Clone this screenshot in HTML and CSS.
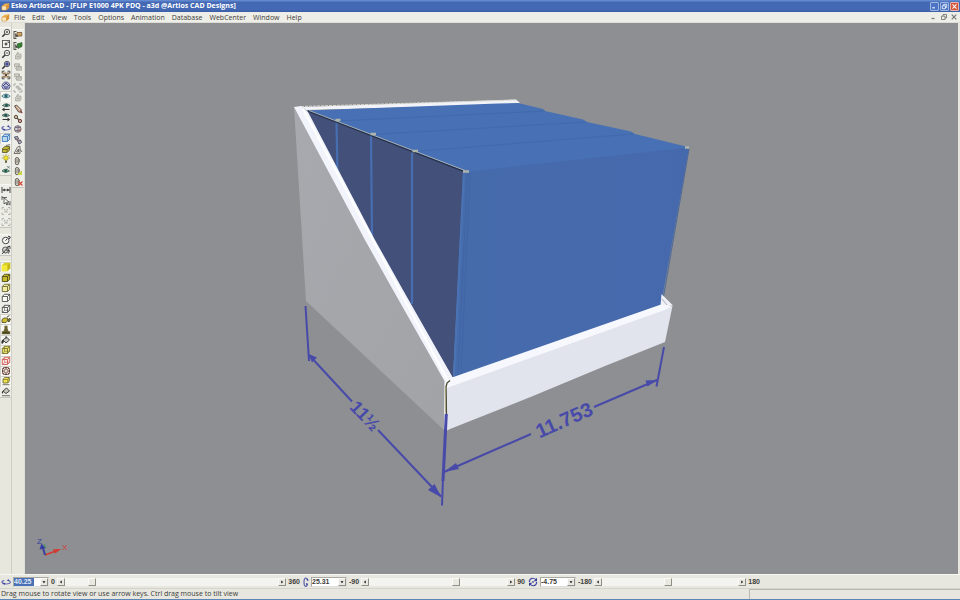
FILE: index.html
```html
<!DOCTYPE html>
<html lang="en">
<head>
<meta charset="utf-8">
<title>Esko ArtiosCAD</title>
<link rel="stylesheet" href="styles.css">
</head>
<body>
<svg class="defs" aria-hidden="true">
  <defs>
    <symbol id="lens" viewBox="0 0 10 10"><circle cx="6" cy="4" r="2.7" fill="#f4f4ee" stroke="#444" stroke-width=".9"/><path d="M4 6 1.3 8.8" stroke="#333" stroke-width="1.5"/></symbol>
    <symbol id="zoom-in" viewBox="0 0 10 10"><use href="#lens"/><path d="M4.8 4h2.4M6 2.8v2.4" stroke="#333" stroke-width=".8"/></symbol>
    <symbol id="zoom-out" viewBox="0 0 10 10"><use href="#lens"/><path d="M4.6 4h2.8" stroke="#333" stroke-width=".8"/></symbol>
    <symbol id="zoom-prev" viewBox="0 0 10 10"><use href="#lens"/><circle cx="6" cy="4" r="2.2" fill="#7980b8"/><path d="M5 4h2M6 3v2" stroke="#303878" stroke-width=".9"/></symbol>
    <symbol id="fit" viewBox="0 0 10 10"><rect x="1.5" y="1.5" width="7" height="7" fill="#f6f6f0" stroke="#555" stroke-width=".9"/><path d="M3.5 5h3M5 3.5v3" stroke="#222" stroke-width="1"/><path d="M7 2v1.5h1.5" stroke="#333" fill="none" stroke-width=".7"/></symbol>
    <symbol id="extents" viewBox="0 0 10 10"><path d="M1.2 3.5V1.2h2.3M6.5 1.2h2.3v2.3M8.8 6.5v2.3H6.5M3.500 8.800H1.200V6.500" fill="none" stroke="#444"/><path d="M1.800 2.500h3v2h-3zM5.500 2.500h2.800v2H5.500zM1.800 5.700h3v2h-3zM5.500 5.700h2.800v2H5.500z" fill="#9a7d5c"/><path d="m4 4 2 2M6 4 4 6" stroke="#55432e"/></symbol>
    <symbol id="home" viewBox="0 0 10 10"><path d="M1 5.400C1 2.700 3 1 5 1s4 1.700 4 4.400L7.800 8H2.200z" fill="#c6cae4" stroke="#46497c" stroke-width=".9"/><path d="M2 5 5 2.200 8 5M5 8V5" fill="none" stroke="#34386e"/><circle cx="3.400" cy="6" r=".8" fill="#3d458c"/><circle cx="6.700" cy="6" r=".8" fill="#3d458c"/></symbol>
    <symbol id="eye" viewBox="0 0 10 10"><path d="M.8 5.200Q5 .8 9.200 5.200 5 8.700.8 5.200z" fill="#cfe5e8" stroke="#467780" stroke-width=".9"/><circle cx="5" cy="5" r="1.700" fill="#24636c"/></symbol>
    <symbol id="eye-left" viewBox="0 0 10 10"><path d="M1.500 3.500Q5.500.3 9 3.500 5 6 1.500 3.500z" fill="#a9cac4" stroke="#37594f" stroke-width=".9"/><circle cx="5.500" cy="3.200" r="1.400" fill="#23564e"/><path d="M3.500 5.600.8 7.500l2.700 1.900V8h5V7h-5z" fill="#333"/></symbol>
    <symbol id="eye-right" viewBox="0 0 10 10"><path d="M1 3.500Q4.500.3 8.500 3.500 5 6 1 3.500z" fill="#a9cac4" stroke="#37594f" stroke-width=".9"/><circle cx="4.700" cy="3.200" r="1.400" fill="#23564e"/><path d="m6.500 5.600 2.700 1.900-2.700 1.900V8h-5V7h5z" fill="#333"/></symbol>
    <symbol id="orbit" viewBox="0 0 10 10"><path d="M3.300 3.500C0 4 0 7 5 7s5.500-2.500 2.200-3.500" fill="none" stroke="#5b62ad" stroke-width="1.100"/><path d="m2 5.500 2.300.8-1.300 2z" fill="#373f98"/><path d="m5.500 3.200 2.500-1v2z" fill="#373f98"/></symbol>
    <symbol id="orbit-v" viewBox="2 0 6 10"><path d="M6.500 3.300C6 0 3 0 3 5s2.500 5.500 3.500 2.200" fill="none" stroke="#5b62ad" stroke-width="1.200"/><path d="m4.800 6 .8 2.500 1.600-1.700zM5.200 1.500l2.300 1L7 4.400z" fill="#373f98"/></symbol>
    <symbol id="spin" viewBox="0 0 10 10"><path d="M1.300 5C1.500.8 6 .2 8 3M8.700 5C8.500 9.200 4 9.800 2 7" fill="none" stroke="#4a51a5" stroke-width="1.200"/><path d="M9 .8v3.400H5.700zM1 9.200V5.800h3.300z" fill="#373f98"/><circle cx="5" cy="5" r=".9" fill="#555da8"/></symbol>
    <symbol id="cube" viewBox="0 0 10 10"><path d="M1.300 3.500 3.500 1.300h5.200v4.900L6.500 8.500H1.300z" fill="var(--face)"/><path d="M1.300 3.500h5.200v5H1.300zM1.300 3.500l2.200-2.200h5.200v4.900L6.500 8.500M6.500 3.500l2.200-2.200" fill="none" stroke="var(--edge)" stroke-width=".9" stroke-linejoin="round"/></symbol>
    <symbol id="cube-solid" viewBox="0 0 10 10"><path d="M.8 3.300 3.500.8h5.700v5.400L6.500 9.200H.8z" fill="#d9cf22"/><path d="M.8 3.300h5.700v5.900H.8z" fill="#f2e93c"/><path d="M6.500 3.300 9.200.8v5.400l-2.700 3z" fill="#c2b61c"/></symbol>
    <symbol id="cube-wire" viewBox="0 0 10 10"><use href="#cube"/><path d="M3.500 1.300v5h5.200M3.500 6.300 1.300 8.500" fill="none" stroke="var(--edge)" stroke-width=".6"/></symbol>
    <symbol id="fold" viewBox="0 0 10 10"><path d="M1.500 4.500 4 2.500h4.500v3.800L6 8.500H1.500z" fill="#c5b930" stroke="#575229" stroke-width=".8"/><path d="M2 5.500h4V8M6 5.500l2.500-2" fill="none" stroke="#575229" stroke-width=".8"/><path d="m5 1.500 4-.8" stroke="#777"/></symbol>
    <symbol id="bulb" viewBox="0 0 10 10"><circle cx="5" cy="4" r="2.300" fill="#f1e32f" stroke="#9a8c20" stroke-width=".6"/><path d="M4 6.500h2v2.300H4z" fill="#62603f"/><path d="M5 0v1M.8 4h1.400M7.800 4h1.400M1.800 1l1 1M8.200 1l-1 1" stroke="#aaa036" stroke-width=".8"/></symbol>
    <symbol id="eye-x" viewBox="0 0 10 10"><path d="M1 6Q4.500 2.500 8.500 6 4.500 9 1 6z" fill="#99beb2" stroke="#3b6658" stroke-width=".9"/><circle cx="4.700" cy="5.900" r="1.400" fill="#215247"/><path d="m6.200 1 2.500 2.500M8.700 1 6.200 3.500" stroke="#6a8180" stroke-width=".9"/></symbol>
    <symbol id="dimension" viewBox="0 0 10 10"><path d="M1 2v6M9 2v6M1.500 5h7" stroke="#444" fill="none"/><path d="M1.500 5 4 3.400v3.200zM8.500 5 6 3.400v3.200z" fill="#444"/></symbol>
    <symbol id="pick-dim" viewBox="0 0 10 10"><path d="M1 1.500h5M1 0v4M5.500 6v3M9 5v4.500M5.500 8H9" stroke="#555" stroke-width=".9"/><path d="m3 2 5 4-2.300.2 1 2.300-1 .4-1-2.300L3 8z" fill="#f8f8f2" stroke="#333" stroke-width=".7"/></symbol>
    <symbol id="dim-grey" viewBox="0 0 10 10"><path d="M1 3.500v-2h2M7 1.500h2v2M9 6.500v2H7M3 8.500H1v-2" fill="none" stroke="#b4b4ac"/><path d="m3 3 4 4M7 3 3 7" stroke="#b8b8b0" stroke-width="1.200" stroke-dasharray="2 1"/></symbol>
    <symbol id="clock" viewBox="0 0 10 10"><circle cx="4.700" cy="5.500" r="3.300" fill="#f7f7f2" stroke="#46464e"/><path d="m4.500 5.700 1.800-2M7 1.200l2.300.8-1 2" stroke="#333" fill="none"/></symbol>
    <symbol id="clock-off" viewBox="0 0 10 10"><circle cx="4.500" cy="5" r="3" fill="#d2d2ce" stroke="#555"/><path d="M8.500.8 1 9M5 5l3.500.5-1 3M6.500 1.500H9V4" stroke="#333" stroke-width=".9" fill="none"/></symbol>
    <symbol id="lift" viewBox="0 0 10 10"><path d="M1 5.500 3 4h3.500v3L5 8.500H1z" fill="#ccbe2e" stroke="#4e4a29" stroke-width=".8"/><path d="m6 3 2.500-1.500M7 7l1-2.500 1.500.5-1.500 3z" stroke="#555234" fill="#8f893c"/></symbol>
    <symbol id="stamp" viewBox="0 0 10 10"><path d="M3.500.8h3v2.700l1 2.800h1.700v3H.8v-3h1.700l1-2.800z" fill="#67612e"/><path d="M2 7.700h6" stroke="#3b381c" stroke-width=".8"/></symbol>
    <symbol id="bucket" viewBox="0 0 10 10"><path d="m2 5 3.500-3 3 3L5 8z" fill="#c7c7c0" stroke="#35352f" stroke-width=".9"/><path d="M2 5C.5 5 .8 8 1 8.500 2.500 8 3 6 2 5zM5 1v3" fill="#333" stroke="#333" stroke-width=".8"/></symbol>
    <symbol id="bucket-ground" viewBox="0 0 10 10"><path d="m2 4 3.500-3 3 3L5 6.500z" fill="#c7c7c0" stroke="#35352f" stroke-width=".9"/><path d="M2 4C.7 4 .8 6 1 6.800 2.300 6.300 2.700 5 2 4z" fill="#333"/><path d="M1 8.700h8" stroke="#77756a" stroke-width="1.100"/></symbol>
    <symbol id="target" viewBox="0 0 10 10"><rect x="1.500" y="1.500" width="7" height="7" rx="2" fill="#e8dcd3" stroke="#704e43"/><path d="M5 1v3M5 6v3M1 5h3M6 5h3M2 2l1.500 1.500M8 2 6.500 3.500M2 8l1.500-1.500M8 8 6.500 6.500" stroke="#5d3730" stroke-width=".9"/></symbol>
    <symbol id="cube-base" viewBox="0 0 10 10"><path d="M2 3.500 3.500 1.500h4.800v3.500L6.800 7H2z" fill="#eee34a" stroke="#64602d" stroke-width=".8"/><path d="M2 3.500h4.800V7M6.800 3.500l1.500-2" stroke="#64602d" stroke-width=".6" fill="none"/><path d="M1.500 8.700h7" stroke="#777664"/></symbol>
    <symbol id="pick-box" viewBox="0 0 10 10"><path d="M1 1v8M1 1.500h2.500M1 8.500h2.500" stroke="#5a574b" fill="none"/><path d="M4 2.500h4.800v3.500H4z" fill="#cfa469" stroke="#70532f" stroke-width=".8"/><path d="m2 3 3.500 3.500-2 .2L2.500 8z" fill="#444"/></symbol>
    <symbol id="pick-green" viewBox="0 0 10 10"><path d="M1 1v8M1 1.500h2.500M1 8.500h2.500" stroke="#5a574b" fill="none"/><path d="M4 3 9 1.500v4L5 7.500z" fill="#338033" stroke="#285528" stroke-width=".6"/><path d="m2 3 3.500 3.500-2 .2L2.500 8z" fill="#444"/></symbol>
    <symbol id="grey-box" viewBox="0 0 10 10"><path d="M2.500 4.500 4 3h4v4L6.500 8h-4zM4 3V1.800h2" fill="#cbcbc4" stroke="#aaa9a2" stroke-width=".8"/><path d="M4 5.500h2.500" stroke="#a6a69f" stroke-width=".8"/></symbol>
    <symbol id="grey-stack" viewBox="0 0 10 10"><path d="M1.500 1.800h5v3h-5zM3.500 4.500h5v3.800h-5z" fill="#cecec7" stroke="#a9a9a2" stroke-width=".8"/><path d="m2 7 5-5M4 8l4-3" stroke="#aaa9a2" stroke-width=".8"/></symbol>
    <symbol id="grey-group" viewBox="0 0 10 10"><path d="M1 3V1h2M6 1h3v2M9 7v2H6M3 9H1V7" fill="none" stroke="#a8a8a1"/><path d="M3 3h3v2H3zM5 5h3v2H5z" fill="#c6c6be" stroke="#adada6" stroke-width=".6"/></symbol>
    <symbol id="pencil" viewBox="0 0 10 10"><path d="m1.500 2 2-1 4.800 4.800-.5 2.400-2.300-.2z" fill="#c9a68b" stroke="#564944" stroke-width=".9"/><path d="m3.500 2.500 3.500 3.500" stroke="#f1ddca" stroke-width=".8"/><path d="m7.500 7.200 1.700 1.800" stroke="#8a3737" stroke-width="1.200"/></symbol>
    <symbol id="link" viewBox="0 0 10 10"><circle cx="3" cy="3" r="1.700" fill="#cbb899" stroke="#5d5044"/><circle cx="7" cy="7" r="1.700" fill="#c7a09b" stroke="#6b4540"/><path d="m4 4 2 2" stroke="#554" stroke-width="1.300"/></symbol>
    <symbol id="globe" viewBox="0 0 10 10"><circle cx="4.800" cy="5" r="3.300" fill="#d5cfd1" stroke="#6a5c63" stroke-width=".9"/><path d="M2 3.500h6M2 6.500h6M5 2v6" stroke="#655e78" stroke-width=".8"/><circle cx="7" cy="6" r="1" fill="#ae6a60"/></symbol>
    <symbol id="chain" viewBox="0 0 10 10"><path d="m1.500 2 3-.5 1 2.500-2.500 1zM4.500 5.500l3-.5 1 2.500L6 9z" fill="#c9c5d0" stroke="#504c65"/><path d="m3.500 3 3 4" stroke="#826a5c"/></symbol>
    <symbol id="set-square" viewBox="0 0 10 10"><path d="M1 8.500 4.500 2 7 1v7.500zM3.500 7 5.500 4v3z" fill="#e6e6df" stroke="#68655d" stroke-width=".9"/><path d="m7 4 2 3" stroke="#777"/></symbol>
    <symbol id="clip" viewBox="0 0 10 10"><rect x="2.300" y="1.500" width="3.500" height="7.200" rx="1.700" fill="#d1cec4" stroke="#5e594e" stroke-width=".9"/><path d="M4 3v4M6.500 3v3" stroke="#77736a" stroke-width=".8"/></symbol>
    <symbol id="clip-new" viewBox="0 0 10 10"><use href="#clip"/><path d="m5 7.500 4-3V9H5z" fill="#c9d443"/></symbol>
    <symbol id="clip-del" viewBox="0 0 10 10"><use href="#clip"/><path d="m5.500 4.500 4 4M9.500 4.500l-4 4" stroke="#d04b3a" stroke-width="1.200"/></symbol>
    <symbol id="minimize" viewBox="0 0 8 8"><path d="M1.500 5.500h3" stroke="currentColor" stroke-width="1.200"/></symbol>
    <symbol id="restore" viewBox="0 0 8 8"><path d="M3 3V1.500h3.500V5H5M1.500 3.200H5v3.300H1.500z" fill="none" stroke="currentColor" stroke-width=".9"/></symbol>
    <symbol id="close" viewBox="0 0 8 8"><path d="m1.700 1.700 4.600 4.600M6.300 1.700 1.700 6.300" stroke="currentColor" stroke-width="1.200"/></symbol>
    <symbol id="app" viewBox="0 0 10 10"><path d="M1 4.500 4 2l5-.5v5L6 9H1z" fill="#f0b24c"/><path d="M1 4.500h5V9H1z" fill="#fbe9bd" stroke="#c98b3c" stroke-width=".6"/><path d="m6 4.500 3-3v5L6 9z" fill="#dc9233"/></symbol>
    <symbol id="arrow-l" viewBox="0 0 8 8"><path d="M5 2v4L2.500 4z" fill="#111"/></symbol>
    <symbol id="arrow-r" viewBox="0 0 8 8"><path d="M3 2v4l2.500-2z" fill="#111"/></symbol>
    <symbol id="arrow-d" viewBox="0 0 8 8"><path d="M2 3h4L4 5.500z" fill="#111"/></symbol>
  </defs>
</svg>

<div class="app">
  <header class="titlebar">
    <svg class="logo"><use href="#app"/></svg>
    <h1 class="title">Esko ArtiosCAD - [FLIP E1000 4PK PDQ - a3d @Artios CAD Designs]</h1>
    <div class="window-buttons">
      <button class="win" aria-label="Minimize"><svg><use href="#minimize"/></svg></button>
      <button class="win" aria-label="Restore"><svg><use href="#restore"/></svg></button>
      <button class="win win-close" aria-label="Close"><svg><use href="#close"/></svg></button>
    </div>
  </header>

  <nav class="menubar">
    <svg class="logo"><use href="#app"/></svg>
    <div class="menus">
      <button>File</button><button>Edit</button><button>View</button><button>Tools</button><button>Options</button><button>Animation</button><button>Database</button><button>WebCenter</button><button>Window</button><button>Help</button>
    </div>
    <div class="window-buttons">
      <button class="mdi" aria-label="Minimize document"><svg><use href="#minimize"/></svg></button>
      <button class="mdi" aria-label="Restore document"><svg><use href="#restore"/></svg></button>
      <button class="mdi" aria-label="Close document"><svg><use href="#close"/></svg></button>
    </div>
  </nav>

  <main class="workspace">
    <div class="toolbars">
      <div class="toolbar">
        <div class="tools tools-view">
          <button aria-label="Zoom in"><svg><use href="#zoom-in"/></svg></button>
          <button aria-label="Scale to fit"><svg><use href="#fit"/></svg></button>
          <button aria-label="Zoom out"><svg><use href="#zoom-out"/></svg></button>
          <button aria-label="Previous zoom"><svg><use href="#zoom-prev"/></svg></button>
          <button aria-label="Extents"><svg><use href="#extents"/></svg></button>
          <button aria-label="Home view"><svg><use href="#home"/></svg></button>
          <button class="on" aria-label="View angle"><svg><use href="#eye"/></svg></button>
          <button aria-label="View left"><svg><use href="#eye-left"/></svg></button>
          <button aria-label="View right"><svg><use href="#eye-right"/></svg></button>
          <button aria-label="Orbit"><svg><use href="#orbit"/></svg></button>
          <button class="on cube-blue" aria-label="Perspective"><svg><use href="#cube"/></svg></button>
          <button aria-label="Fold angle"><svg><use href="#fold"/></svg></button>
          <button aria-label="Lighting"><svg><use href="#bulb"/></svg></button>
          <button aria-label="Hide"><svg><use href="#eye-x"/></svg></button>
        </div>
        <div class="tools tools-dimension">
          <button aria-label="Dimension"><svg><use href="#dimension"/></svg></button>
          <button aria-label="Select dimension"><svg><use href="#pick-dim"/></svg></button>
          <button disabled aria-label="Move dimension"><svg><use href="#dim-grey"/></svg></button>
          <button disabled aria-label="Delete dimension"><svg><use href="#dim-grey"/></svg></button>
        </div>
        <div class="tools tools-time">
          <button aria-label="Timer"><svg><use href="#clock"/></svg></button>
          <button aria-label="Stop timer"><svg><use href="#clock-off"/></svg></button>
        </div>
        <div class="tools tools-shade">
          <button class="on" aria-label="Solid"><svg><use href="#cube-solid"/></svg></button>
          <button class="cube-olive" aria-label="Solid with edges"><svg><use href="#cube"/></svg></button>
          <button class="cube-cream" aria-label="Light solid"><svg><use href="#cube"/></svg></button>
          <button class="cube-plain" aria-label="Hidden line"><svg><use href="#cube"/></svg></button>
          <button class="cube-plain" aria-label="Wireframe"><svg><use href="#cube-wire"/></svg></button>
          <button class="on" aria-label="Thickness"><svg><use href="#lift"/></svg></button>
          <button class="on" aria-label="Graphics"><svg><use href="#stamp"/></svg></button>
          <button class="on" aria-label="Fill"><svg><use href="#bucket"/></svg></button>
          <button class="on cube-yellow" aria-label="Transparent"><svg><use href="#cube-wire"/></svg></button>
          <button class="on cube-red" aria-label="Bounds"><svg><use href="#cube-wire"/></svg></button>
          <button class="on" aria-label="Center"><svg><use href="#target"/></svg></button>
          <button class="on" aria-label="Ground"><svg><use href="#cube-base"/></svg></button>
          <button aria-label="Background"><svg><use href="#bucket-ground"/></svg></button>
        </div>
      </div>
      <div class="toolbar toolbar-edit">
        <div class="tools tools-edit">
          <button aria-label="Select design"><svg><use href="#pick-box"/></svg></button>
          <button aria-label="Select piece"><svg><use href="#pick-green"/></svg></button>
          <button disabled aria-label="Copy"><svg><use href="#grey-box"/></svg></button>
          <button disabled aria-label="Move"><svg><use href="#grey-stack"/></svg></button>
          <button disabled aria-label="Stack"><svg><use href="#grey-stack"/></svg></button>
          <button disabled aria-label="Group"><svg><use href="#grey-group"/></svg></button>
          <button disabled aria-label="Rotate"><svg><use href="#grey-box"/></svg></button>
          <button aria-label="Draw"><svg><use href="#pencil"/></svg></button>
          <button aria-label="Mate"><svg><use href="#link"/></svg></button>
          <button aria-label="Origin"><svg><use href="#globe"/></svg></button>
          <button aria-label="Chain"><svg><use href="#chain"/></svg></button>
          <button aria-label="Angle"><svg><use href="#set-square"/></svg></button>
          <button aria-label="Attach"><svg><use href="#clip"/></svg></button>
          <button aria-label="New attachment"><svg><use href="#clip-new"/></svg></button>
          <button aria-label="Delete attachment"><svg><use href="#clip-del"/></svg></button>
        </div>
      </div>
    </div>

    <section class="viewport" aria-label="3D view">
      <svg class="model" viewBox="25 23 933 551" role="img" aria-label="Display tray with five cartons">
        <defs>
          <linearGradient id="side" x1="0" y1="0" x2="1" y2="1"><stop offset="0" stop-color="#a8a9ae"/><stop offset="1" stop-color="#a2a3a7"/></linearGradient>
          <linearGradient id="front" x1="0" y1="0" x2="1" y2="0"><stop offset="0" stop-color="#466bab"/><stop offset="1" stop-color="#4669ad"/></linearGradient>
        </defs>
        <path d="M302 107 516 99.500 520 103 500 105 306 110z" fill="#f1f3f8"/>
        <path d="M301 106.500 516 100" stroke="#d8d6ce" stroke-dasharray="3 1" fill="none"/>
        <path d="M307 110.500 498 103.500 518 103 543 109 545 111 583 119.500 587 122 631 131.500 635 134 688 147 688 151 465 173z" fill="#4770b5"/>
        <path d="m338 121 207-10M373 134.500 586 122M415 151.500 633 134" stroke="#4068a9" stroke-width=".8" fill="none"/>
        <path d="M307 111 464 172 453 378 400 290z" fill="#435079"/>
        <path d="m336.500 122 1 52M371 136l1 100M412 153v151" stroke="#476eb1" stroke-width="2.200" fill="none"/>
        <path d="m463 172 226-24.500L661 305 453 378z" fill="url(#front)"/>
        <path d="M463 172h2L455 377h-2z" fill="#4a73b5"/>
        <path d="M467.500 173 458 376M470 173l-9 202" stroke="#3c63a5" stroke-width=".6" fill="none"/>
        <path d="m687 148 2 1-27 156" stroke="#3d5f99" stroke-width=".8" fill="none"/>
        <path d="m308 111 155 60" stroke="#24304d" stroke-width="1.400" fill="none"/>
        <path d="m309 110.500 156 60" stroke="#bfc2b7" stroke-width=".8" fill="none"/>
        <path d="M335.500 120h5M370.500 134h5.500M412.500 151h5.500M463 171.500h6M685 147.500h4" stroke="#aeb5ac" stroke-width="2.400" fill="none"/>
        <path d="m294 107 152 274-2 49-138-129z" fill="url(#side)"/>
        <path d="m294 107 7-1 7 6 67 128 28 50 50 88-6 5-2 47-1-1 .5-48-51.500-91-28-50z" fill="#f2f4fb"/>
        <path d="M303 109 448 381" stroke="#fff" stroke-width="2" fill="none"/>
        <path d="m661.500 294 11 11-12 1z" fill="#eff1f7"/><path d="m662 299 5 6" stroke="#a8abb2" fill="none"/>
        <path d="M447 386v44.500l3-1.500 83-33 72-30 60-24 7.500-36z" fill="#e1e4ed"/>
        <path d="M452 377.500 661 304.500l12 1-7 4L451 386.500l-4 1.500v-5z" fill="#f6f8fd"/>
        <path d="m446.500 416-.5-29 1-4 3-2.500" stroke="#4c4932" stroke-width="1.300" fill="none"/>
        <path d="M445.500 386v26" stroke="#a9a465" stroke-width=".6"/>
        <g class="dimension-lines">
          <path d="m305.500 306 3.500 55M309 355l43 46.500M378 430l63 66.500M444 472l87-38M594 407l63-27M664 347l-7.500 39.500"/>
          <path class="post" d="M446.300 414 443 481"/>
          <path d="m443 478-1 27.500"/>
        </g>
        <path d="m308.500 354 8.500 3.500-5 5zM441.500 497.500 428 490l6.500-6zM444 472l12-9 3 6zM657 380l-11.500.5 2 6z" fill="#484aa9"/>
        <text class="measure measure-depth" transform="translate(365 416) rotate(46)">11½</text>
        <text class="measure" transform="translate(564 420) rotate(-24)">11.753</text>
      </svg>
      <svg class="axes" viewBox="0 0 34 24" role="img" aria-label="Axes">
        <path d="m8 18 12-4.500" stroke="#d23c34" stroke-width="1.800"/><path d="m24 12-8 .3 2 4.500z" fill="#d23c34"/>
        <path d="m7 7 2 4" stroke="#399b55"/>
        <path d="M8 18 6 11" stroke="#363da0" stroke-width="1.900"/><path d="m4.500 6.500-2 6 6-1.300z" fill="#363da0"/>
        <text class="axis-x" x="25" y="13">X</text><text class="axis-z" x="0" y="7">Z</text>
      </svg>
    </section>
  </main>

  <div class="anglebar">
    <div class="angle angle-yaw">
      <svg class="glyph"><use href="#orbit"/></svg>
      <div class="combo"><input class="selected" type="text" value="40.25" aria-label="Rotation"><button aria-label="Rotation list"><svg><use href="#arrow-d"/></svg></button></div>
      <span class="limit">0</span>
      <div class="scroll"><button aria-label="Rotate less"><svg><use href="#arrow-l"/></svg></button><input type="range" min="0" max="360" step="any" value="40.25" aria-label="Rotation angle"><button aria-label="Rotate more"><svg><use href="#arrow-r"/></svg></button></div>
      <span class="limit">360</span>
    </div>
    <div class="angle angle-tilt">
      <svg class="glyph glyph-narrow"><use href="#orbit-v"/></svg>
      <div class="combo"><input type="text" value="25.31" aria-label="Tilt"><button aria-label="Tilt list"><svg><use href="#arrow-d"/></svg></button></div>
      <span class="limit">-90</span>
      <div class="scroll"><button aria-label="Tilt less"><svg><use href="#arrow-l"/></svg></button><input type="range" min="-90" max="90" step="any" value="25.31" aria-label="Tilt angle"><button aria-label="Tilt more"><svg><use href="#arrow-r"/></svg></button></div>
      <span class="limit">90</span>
    </div>
    <div class="angle angle-roll">
      <svg class="glyph"><use href="#spin"/></svg>
      <div class="combo"><input type="text" value="-4.75" aria-label="Roll"><button aria-label="Roll list"><svg><use href="#arrow-d"/></svg></button></div>
      <span class="limit">-180</span>
      <div class="scroll"><button aria-label="Roll less"><svg><use href="#arrow-l"/></svg></button><input type="range" min="-180" max="180" step="any" value="-4.75" aria-label="Roll angle"><button aria-label="Roll more"><svg><use href="#arrow-r"/></svg></button></div>
      <span class="limit">180</span>
    </div>
  </div>

  <footer class="statusbar">
    <p class="hint">Drag mouse to rotate view or use arrow keys. Ctrl drag mouse to tilt view</p>
    <div class="pane"></div>
  </footer>
</div>
</body>
</html>
```
FILE: styles.css
```css
* { box-sizing: border-box; }
body {
  margin: 0;
  font-family: "Open Sans", sans-serif;
  font-size: 7px;
  color: #3c3c38;
  background: #e7e7e0;
}
button, input { font: inherit; color: inherit; margin: 0; padding: 0; border: 0; background: none; min-width: 0; }
svg { display: block; }
.defs { position: absolute; width: 0; height: 0; }
.app { display: flex; flex-direction: column; height: 100vh; border-bottom: 1px solid #5c86b6; }

.titlebar, .menubar { display: flex; align-items: center; flex: none; }
.titlebar {
  height: 12px;
  padding: 0 1px;
  gap: 1px;
  color: #fff;
  background: linear-gradient(#6a92d8 0, #4468b4 20%, #4369b5 80%, #3b5da5);
}
.logo { width: 9px; height: 9px; flex: none; }
.title { margin: 0; flex: 1; font: bold 7px/10px "Open Sans", sans-serif; white-space: nowrap; }
.window-buttons { display: flex; gap: 1px; margin-left: auto; }
.win { width: 9px; height: 9px; border: 1px solid #9db5df; border-radius: 1px; background: #4c74c7; color: #fff; }
.win-close { background: #d2553c; border-color: #e5b4ab; }
.win svg { width: 7px; height: 7px; }
.menubar { height: 11px; padding: 0 1px; gap: 4px; background: #eeeee9; border-bottom: 1px solid #deded6; }
.menus { display: flex; gap: 7px; line-height: 9px; }
.mdi { width: 9px; height: 9px; color: #777; }
.mdi svg { width: 8px; height: 8px; }

.workspace { flex: 1; min-height: 0; display: flex; }
.toolbars { display: flex; flex: none; background: #e7e7de; }
.toolbar { width: 12px; padding-top: 4px; border-right: 1px solid #cfcfc8; }
.toolbar-edit { padding-top: 6px; border-right-color: #dfdfd9; width: 13px; }
.tools { display: flex; flex-direction: column; background: #eeeee8; border-top: 1px solid #f8f8f4; border-bottom: 1px solid #c7c7bf; }
.tools button { flex: 1; min-height: 0; display: flex; align-items: center; justify-content: center; }
.tools svg { width: 10px; height: 10px; }
.tools .on { background: #f7f7f4; box-shadow: inset 1px 1px #d2d2ca; }
.tools-view { height: 149px; margin-bottom: 8px; }
.tools-dimension { height: 44px; margin-bottom: 6px; }
.tools-time { height: 22px; margin-bottom: 5px; }
.tools-shade { height: 137px; }
.tools-edit { height: 159px; }
.cube-blue { --face: #b7d8ee; --edge: #4277b8; }
.cube-olive { --face: #c6ba28; --edge: #4e4918; }
.cube-cream { --face: #f1eca0; --edge: #6b6736; }
.cube-plain { --face: #fafaf6; --edge: #505050; }
.cube-yellow { --face: #eae26e; --edge: #77712a; }
.cube-red { --face: #f6e7e3; --edge: #d25b55; }

.viewport { position: relative; flex: 1; min-width: 0; background: #8d8f92; margin-right: 2px; }
.model { width: 100%; height: 100%; }
.dimension-lines path { fill: none; stroke: #484aa9; stroke-width: 2px; }
.dimension-lines .post { stroke-width: 3px; }
.measure { font: bold 20px "Liberation Sans", sans-serif; fill: #484aa9; text-anchor: middle; dominant-baseline: central; }
.measure-depth { font-size: 18px; }
.axes { position: absolute; left: 12px; bottom: 13px; width: 34px; height: 24px; }
.axes text { font: 8px "Liberation Sans", sans-serif; }
.axis-x { fill: #d23c34; }
.axis-z { fill: #363da0; }

.anglebar { flex: none; display: flex; gap: 3px; height: 15px; padding: 2px 0 2px 1px; border-top: 1px solid #f6f6f2; border-bottom: 1px solid #d4d4cc; font-family: "Liberation Sans", sans-serif; }
.angle { display: flex; align-items: center; gap: 2px; min-width: 0; }
.angle-yaw { flex: 0 1 299px; }
.angle-tilt { flex: 0 1 222px; }
.angle-roll { flex: 0 1 232px; }
.glyph { width: 10px; height: 10px; flex: none; }
.glyph-narrow { width: 6px; }
.combo { display: flex; flex: none; width: 36px; height: 10px; background: #fff; border: 1px solid #aaa9a2; border-right-color: #ddd; border-bottom-color: #ddd; }
.combo input { flex: 1; width: 0; font-weight: bold; }
.combo .selected { background: linear-gradient(90deg, #4a70b5 20px, #fff 20px); color: #dfe8f8; }
.combo button, .scroll button { flex: none; width: 8px; height: 8px; background: #e9e9e2; border: 1px solid #fafaf8; border-right-color: #8f8f88; border-bottom-color: #8f8f88; }
.combo svg, .scroll svg { width: 6px; height: 6px; }
.limit { font-weight: bold; white-space: nowrap; }
.scroll { display: flex; flex: 1; min-width: 0; height: 8px; background: #f3f3ef; }
.scroll input { flex: 1; width: 0; height: 8px; appearance: none; background: #f3f3ef; }
.scroll input::-webkit-slider-thumb { appearance: none; width: 8px; height: 8px; background: #e9e9e2; border: 1px solid #fafaf8; border-right-color: #8f8f88; border-bottom-color: #8f8f88; }

.statusbar { flex: none; display: flex; height: 10px; line-height: 10px; }
.hint { margin: 0; padding-left: 1px; flex: 75 1 0; white-space: nowrap; }
.pane { flex: 21 1 0; border: 1px solid #b9b9b1; border-right: 0; border-bottom: 0; }
```
